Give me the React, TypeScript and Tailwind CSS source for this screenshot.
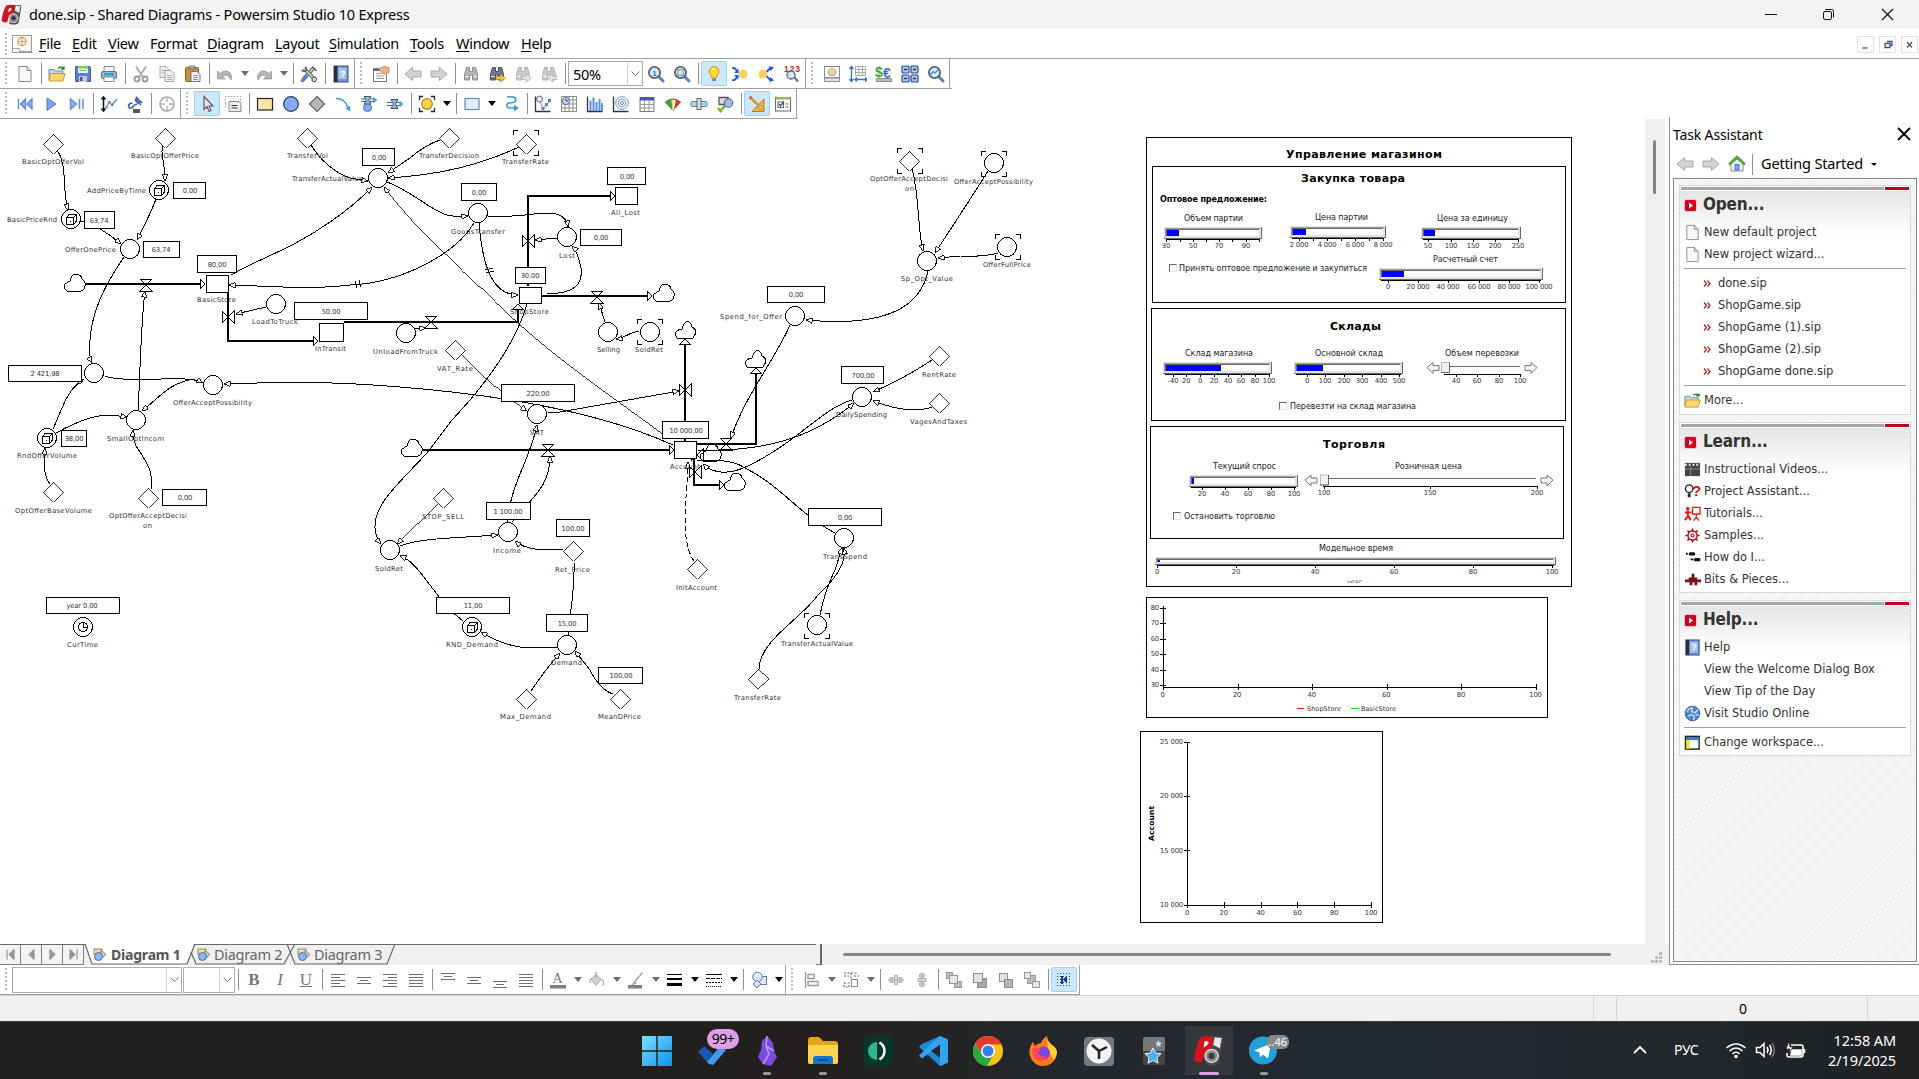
import React from "react";

const SANS = "font-['Noto_Sans','Open_Sans',sans-serif]";
const SHEET_TOP = 119;

/* ---------- icon set ---------- */

const Svg = ({ children, size = 18 }: { children: React.ReactNode; size?: number }) => (
  <svg width={size} height={size} viewBox="0 0 18 18" fill="none" className="shrink-0">
    {children}
  </svg>
);

const lens = (extra?: React.ReactNode) => (
  <>
    <path d="M11 11l5 5" stroke="#5b7fc4" strokeWidth="3" strokeLinecap="round" />
    <circle cx="7.5" cy="7.5" r="5.6" fill="#d5eafb" stroke="#59616b" strokeWidth="1.8" />
    {extra}
  </>
);

const binoculars = (c: string, d: string) => (
  <>
    <path d="M4.5 2.5h3v4h3v-4h3l2 7v5.500h-5V10h-3v5h-5V9.500z" fill={c} stroke={d} strokeWidth="1" strokeLinejoin="round" />
    <path d="M3 11.500h3.500M11.500 11.500H15" stroke="#fff" strokeWidth="1" />
  </>
);

const axes = <path d="M1.500 1.500v15h15" stroke="#333" strokeWidth="1.300" />;

const rows = (list: [number, number, number][], c = "#6e6e6e") => (
  <g shapeRendering="crispEdges">
    {list.map(([x, y, w], i) => (
      <rect key={i} x={x} y={y} width={w} height="1" fill={c} />
    ))}
  </g>
);

const squares = (a: [number, number], b: [number, number], s: number, top = false) => (
  <>
    <rect x={a[0] + 0.5} y={a[1] + 0.5} width={s} height={s} fill={top ? "#a5a5a5" : "#e3e3e3"} stroke="#8f8f8f" />
    <rect x={b[0] + 0.5} y={b[1] + 0.5} width={s} height={s} fill={top ? "#e3e3e3" : "#b5b5b5"} stroke="#8f8f8f" />
  </>
);

const icons: Record<string, React.ReactNode> = {
  page: (
    <>
      <path d="M3 1.500h8l4 4v11H3z" fill="#f8f8f8" stroke="#8a8a8a" />
      <path d="M11 1.500v4h4" fill="#ddd" stroke="#8a8a8a" />
    </>
  ),
  open: (
    <>
      <path d="M1 15V4.500h5l1.500 1.500H15V15z" fill="#bcd9f0" stroke="#7f8a80" />
      <path d="M2.500 8.500H17L15 16H1z" fill="#fbd56e" stroke="#c69a35" />
      <path d="M10 3.500q3-2.500 5.500 0M13 4h3V1.500" stroke="#2d8a1e" strokeWidth="1.400" />
    </>
  ),
  save: (
    <>
      <path d="M1.500 1.500h14l1 1v14h-15z" fill="#5b7fd0" stroke="#4462ab" />
      <rect x="4" y="1" width="10" height="7" fill="#e9f7e4" />
      <rect x="4" y="1" width="10" height="2.500" fill="#6fda57" />
      <path d="M5.500 5.500h7" stroke="#8aa" />
      <rect x="5" y="11" width="8" height="6" fill="#c6ccd8" />
      <rect x="6" y="12" width="2.500" height="4" fill="#3c559a" />
    </>
  ),
  print: (
    <>
      <path d="M4 7V1.500h10V7" fill="#f2f8fb" stroke="#889" />
      <rect x="1.500" y="6.500" width="15" height="7" rx="1.500" fill="#a9b4c0" stroke="#68727e" />
      <rect x="4" y="8" width="10" height="2.500" fill="#26a9cf" />
      <path d="M4 12h10v4.500H4z" fill="#fff" stroke="#889" />
    </>
  ),
  cut: (
    <>
      <path d="M4 1.500l6.500 10M14 1.500L7.500 11.500" stroke="#b0b0b0" strokeWidth="2" />
      <circle cx="5" cy="14" r="2.500" stroke="#999" strokeWidth="1.800" />
      <circle cx="13" cy="14" r="2.500" stroke="#999" strokeWidth="1.800" />
    </>
  ),
  copy: (
    <>
      <path d="M2 1.500h6l3 3v8H2z" fill="#eee" stroke="#aaa" />
      <path d="M7 5.500h6l3 3v8H7z" fill="#f2f2f2" stroke="#a0a0a0" />
      <path d="M9 10.500h5M9 12.500h5M9 14.500h5M4 5.500h3M4 8h2" stroke="#aaa" />
    </>
  ),
  paste: (
    <>
      <rect x="1.500" y="2.500" width="13" height="14" rx="1" fill="#c99045" stroke="#8d6025" />
      <rect x="5" y="1" width="6" height="3" fill="#aaa" stroke="#666" strokeWidth=".7" />
      <path d="M7 6.500h6l3 3v7H7z" fill="#f6f6f6" stroke="#777" />
      <path d="M9 10.500h5M9 12.500h5M9 14.500h5" stroke="#999" />
    </>
  ),
  undo: <path d="M1.500 6v8h8l-2.500-2.500q4-4 8 3.500q2-5-2-8t-9 1.500z" fill="#b5b5b5" stroke="#999" strokeWidth=".8" />,
  redo: <path d="M16.500 6v8h-8l2.500-2.500q-4-4-8 3.500q-2-5 2-8t9 1.500z" fill="#b5b5b5" stroke="#999" strokeWidth=".8" />,
  tools: (
    <>
      <path d="M14 2.500L3.500 14" stroke="#555" strokeWidth="3.500" />
      <path d="M14 2.500L3.500 14" stroke="#cfd4da" strokeWidth="1.800" />
      <path d="M4 3.500l11 11" stroke="#555" strokeWidth="3.200" />
      <path d="M4 3.500l11 11" stroke="#dde1e6" strokeWidth="1.500" />
      <path d="M2.500 15.500l3.500-3.500" stroke="#5b82cf" strokeWidth="3.600" strokeLinecap="round" />
      <path d="M1.500 5.500l3.500 1L6.500 5l-1-3.500M12.500 2l4 4" stroke="#555" strokeWidth="1.500" />
      <path d="M12 13l3-1 2 2-2 3-3-1z" fill="#ccd2d8" stroke="#555" />
    </>
  ),
  book: (
    <>
      <rect x="2" y="1" width="14" height="16" fill="#6f97dc" stroke="#3a4d7c" />
      <rect x="2" y="1" width="3.500" height="16" fill="#2a2e38" />
      <rect x="6.500" y="3" width="8" height="11" fill="#a8c5f0" />
      <text x="8" y="12" fontSize="9" fontWeight="700" fill="#fff" fontFamily="Liberation Sans">?</text>
    </>
  ),
  props: (
    <>
      <rect x="1.500" y="3.500" width="13" height="13" fill="#fff" stroke="#777" />
      <rect x="1.500" y="3.500" width="13" height="2.500" fill="#5a6fa8" />
      <path d="M4 8.500h5M4 11h8M4 13.500h8" stroke="#999" />
      <path d="M7 3.500q5-3.500 10-1v5l-4 1.500-3-1-2-2z" fill="#efb386" stroke="#b98560" strokeWidth=".8" />
    </>
  ),
  back: <path d="M1 9l7.500-6.500v3.500H17v6H8.500v3.500z" fill="#d2d2d2" stroke="#a8a8a8" />,
  fwd: <path d="M17 9L9.500 2.500v3.500H1v6h8.500v3.500z" fill="#d2d2d2" stroke="#a8a8a8" />,
  find: binoculars("#b5b5b5", "#8c8c8c"),
  findNext: (
    <>
      {binoculars("#6b7798", "#454c5e")}
      <path d="M8 11.500h4.500V9l5 4-5 4v-2.500H8z" fill="#f1cc3e" stroke="#a98917" strokeWidth=".7" />
    </>
  ),
  findFwd: (
    <>
      {binoculars("#c9c9c9", "#b3b3b3")}
      <path d="M8 11.500h4.500V9l5 4-5 4v-2.500H8z" fill="#e5e5e5" stroke="#b5b5b5" strokeWidth=".7" />
    </>
  ),
  findBack: (
    <>
      {binoculars("#c9c9c9", "#b3b3b3")}
      <path d="M17 11.500h-4.500V9l-5 4 5 4v-2.500H17z" fill="#e5e5e5" stroke="#b5b5b5" strokeWidth=".7" />
    </>
  ),
  zoomOne: lens(<text x="5.300" y="10.500" fontSize="8" fontWeight="700" fill="#2b6fcf" fontFamily="Liberation Sans">1</text>),
  zoomFit: lens(<rect x="4.800" y="4.800" width="5.400" height="5.400" stroke="#7c8792" />),
  bulb: (
    <>
      <path d="M9 1.500a5 5 0 0 1 3 9l-.8 2.500H6.800L6 10.500a5 5 0 0 1 3-9z" fill="#ffd92e" stroke="#d29b12" />
      <path d="M7.500 5q0-1.500 2-1.500" stroke="#fff" strokeWidth="1.500" />
      <path d="M7 13.500h4v2.500H7z" fill="#888" />
    </>
  ),
  flowIn: (
    <>
      <circle cx="12" cy="9" r="4.500" fill="#fbcf5f" />
      <path d="M1 3q3-1 5 3M1 15q3 1 5-3" stroke="#1f57e0" strokeWidth="1.800" />
      <path d="M7.500 3.500v4.500H3zM7.500 14.500V10H3z" fill="#1f57e0" />
    </>
  ),
  flowOut: (
    <>
      <circle cx="6" cy="9" r="4.500" fill="#fbcf5f" />
      <path d="M10 7q1-3 4-3.500M10 11q1 3 4 3.500" stroke="#1f57e0" strokeWidth="1.800" />
      <path d="M12 1l5 1.500L13.500 6zM12 17l5-1.500L13.500 12z" fill="#1f57e0" />
    </>
  ),
  digits: (
    <>
      <text x="1" y="7" fontSize="8.500" fontWeight="700" fill="#d41919" fontFamily="Liberation Sans" textLength="16">123</text>
      <path d="M11 12l4 4.500" stroke="#5b7fc4" strokeWidth="2.500" />
      <circle cx="8" cy="10" r="4" fill="#cfe6f5" stroke="#666" strokeWidth="1.300" />
    </>
  ),
  board: (
    <>
      <rect x="1.500" y="1.500" width="15" height="11" fill="#fdfdfb" stroke="#8d8d8d" />
      <path d="M9 3l4 3-1.500 4.500h-5L5 6z" fill="#ecd7a6" stroke="#a88a55" strokeWidth=".8" />
      <rect x="1.500" y="13" width="15" height="3.500" fill="#dfe4ee" stroke="#8d8d8d" />
    </>
  ),
  ruler: (
    <>
      <path d="M2.500 2v14M.5 4l2-2.500 2 2.500M.5 14l2 2.500 2-2.500" stroke="#3a6fc0" strokeWidth="1.300" />
      <path d="M6.500 14.500h11M8 12.500L6 14.500l2 2M16 12.500l2 2-2 2" stroke="#3a6fc0" strokeWidth="1.300" />
      <path d="M6.500 1.500h10v9h-10zM10 1.500v9M13.500 1.500v9M6.500 4.500h10M6.500 7.500h10" stroke="#aaa" />
    </>
  ),
  money: (
    <>
      <path d="M1.500 13.500h15v3h-15z" fill="#b5bfae" stroke="#8a9484" />
      <text x="0" y="12" fontSize="14" fontWeight="700" fill="#3da534" fontFamily="Liberation Sans">$</text>
      <text x="8" y="13" fontSize="14" fontWeight="700" fill="#4a6fc0" fontFamily="Liberation Sans">€</text>
    </>
  ),
  calc: (
    <>
      {[[1, 1], [10, 1], [1, 10], [10, 10]].map(([x, y]) => (
        <g key={`${x}-${y}`}>
          <rect x={x} y={y} width="7" height="7" rx="1" fill="#a9c0ea" stroke="#2f4f96" strokeWidth="1.200" />
          <path d={`M${x + 2} ${y + 3.5}h3`} stroke="#222" strokeWidth="1.200" />
        </g>
      ))}
    </>
  ),
  trend: lens(<path d="M3.500 9.500l2.500-3 2 1.500L11 5" stroke="#2b8fcf" strokeWidth="1.200" />),
  rewind: <path d="M2.500 4v10M9.500 4L4.500 9l5 5zM16 4l-5 5 5 5z" fill="#8fb2ee" stroke="#5f87cd" strokeWidth="1.300" />,
  play: <path d="M5 3l9 6-9 6.500z" fill="#7ba4ee" stroke="#5079c4" />,
  step: <path d="M2.500 4l6 5-6 5zM11.500 4v10M15 4v10" fill="#8fb2ee" stroke="#6c92d6" strokeWidth="1.600" />,
  range: (
    <>
      <path d="M3.500 2v14M1.500 4.500L3.500 2l2 2.500M1.500 13.500L3.500 16l2-2.500" stroke="#111" strokeWidth="1.500" />
      <path d="M6 13l3-6 3 3 5-6" stroke="#5b80bd" strokeWidth="1.300" />
      <path d="M5.500 11.500h2v2h-2zM8.500 6h2v2h-2zM11.500 9h2v2h-2z" fill="#5b80bd" />
    </>
  ),
  pin: (
    <>
      <path d="M9 4l6 6M10.500 2.500l5 5-3 1-3-3z" fill="#8aa9e6" stroke="#3c5ea8" strokeWidth="1.500" />
      <path d="M11 9q-4 1-5 4-3 1-3.500-2 .5-3 4-3" stroke="#3c66b5" strokeWidth="1.600" />
      <path d="M7 15h7M7 17h7" stroke="#222" strokeWidth="1.300" />
    </>
  ),
  target: (
    <>
      <circle cx="9" cy="9" r="7" stroke="#aaa" strokeWidth="1.600" />
      <path d="M9 2v5M9 11v5M2 9h5M11 9h5" stroke="#b5b5b5" strokeWidth="1.500" />
    </>
  ),
  pointer: <path d="M6 1.500v13l3-3 2 5 2-1-2-4.500h4z" fill="#e8e8e8" stroke="#555" strokeWidth="1.100" />,
  frame: (
    <>
      <path d="M1.500 8V1.500h15V8M1.500 8v4H4" stroke="#999" strokeDasharray="1.500 1.500" />
      <path d="M5 6.500h10l2 2v8H5z" fill="#eee" stroke="#888" />
      <path d="M7.500 10.500h6M7.500 13h6" stroke="#333" />
    </>
  ),
  stock: <rect x="1.500" y="3.500" width="15" height="11.500" fill="#fbe5a2" stroke="#222" strokeWidth="1.200" />,
  ball: <circle cx="9" cy="9" r="7.300" fill="#86abf5" stroke="#2c3850" strokeWidth="1.200" />,
  rhomb: <path d="M9 1.500L16.500 9 9 16.500 1.500 9z" fill="#b7b7b7" stroke="#666" strokeWidth="1.200" />,
  arc: (
    <>
      <path d="M2 3.500q9 0 12 9" stroke="#3d9ad8" strokeWidth="1.500" />
      <path d="M16.500 16.500l-.5-6-4.500 3z" fill="#3d9ad8" />
    </>
  ),
  flowRate: (
    <>
      <circle cx="7.500" cy="12.500" r="4" fill="#86abf5" stroke="#4c6aab" />
      <path d="M1 4h13M1 6.500h13" stroke="#44698f" />
      <path d="M4 1.500h7L8.500 5.200 11 9H4l2.500-3.800z" fill="#9cb6e0" stroke="#44597f" />
      <path d="M13 1.800l4.500 3.400L13 8.600z" fill="#53a4dd" />
    </>
  ),
  flow: (
    <>
      <path d="M1 7.500h13M1 10.500h13" stroke="#44698f" strokeWidth="1.200" />
      <path d="M5 4.500h7L9.500 9l2.500 4.500H5L7.500 9z" fill="#9cb6e0" stroke="#44597f" />
      <path d="M13.500 5.500L17.500 9l-4 3.500z" fill="#53a4dd" />
    </>
  ),
  sun: (
    <>
      <path d="M1.500 5V1.500H5M13 1.500h3.500V5M16.500 13v3.500H13M5 16.500H1.500V13" stroke="#222" strokeWidth="1.300" />
      <circle cx="9" cy="9" r="5.300" fill="#f9d44b" stroke="#a58630" strokeWidth="1.200" />
    </>
  ),
  box: <rect x="2" y="3.500" width="14" height="11" fill="#e1ecfb" stroke="#6b85b4" strokeWidth="1.200" />,
  squiggle: (
    <>
      <path d="M5 2q9-1 9 2.500T6 8q-3 3 1 5h6" stroke="#3d9ad8" strokeWidth="1.600" />
      <path d="M12 10l5 3-5 3.500z" fill="#3d9ad8" />
    </>
  ),
  timeGraph: (
    <>
      {axes}
      <path d="M6 6l3 8 4-5 3-3" stroke="#5b80bd" />
      <path d="M7.500 12h3v3h-3zM11 8h3v3h-3zM14 4h3v3h-3z" fill="#5b80bd" />
      <circle cx="5.500" cy="4" r="3" fill="#e2ecfa" stroke="#667" />
    </>
  ),
  timeTable: (
    <>
      <path d="M1.500 1.500h15v15h-15zM1.500 5h15M1.500 9h15M1.500 13h15M5 1.500v15M9 1.500v15M13 1.500v15" stroke="#8b8b8b" />
      <circle cx="6" cy="6" r="3.500" fill="#cfe0fa" stroke="#47639c" />
      <path d="M6 4v2h2" stroke="#333" />
    </>
  ),
  bars: (
    <>
      {axes}
      <path d="M4.500 16V5.500M7.500 16V2.500M10.500 16V7M13.500 16V4M16 16V8" stroke="#5a90dc" strokeWidth="2" />
    </>
  ),
  spiral: (
    <>
      {axes}
      <circle cx="10" cy="8" r="6.300" stroke="#6b93cd" />
      <circle cx="10" cy="8" r="3.800" stroke="#6b93cd" />
      <circle cx="10" cy="8" r="1.500" stroke="#6b93cd" />
    </>
  ),
  table: (
    <>
      <path d="M2 2.500h14v14H2z" fill="#fff" stroke="#777" />
      <path d="M2 2h14v3.500H2z" fill="#4a51b8" />
      <path d="M2 9.500h14M2 13h14M6.500 5v11M11 5v11" stroke="#999" />
    </>
  ),
  gauge: (
    <>
      <path d="M1.500 7q7.500-6 15 0L9 15.500z" fill="#f6dc6c" stroke="#555" />
      <path d="M1.500 7Q4 5 7 4.200L9 15.500z" fill="#3aa63a" />
      <path d="M16.500 7Q14 5 11.500 4.200L9 15.500z" fill="#df3c2c" />
      <path d="M9 15L11 5" stroke="#fff" strokeWidth="1.500" />
    </>
  ),
  slider: (
    <>
      <rect x="1" y="6.500" width="16" height="5" rx="1" fill="#a8d1f1" stroke="#5d89af" />
      <rect x="7" y="3.500" width="4" height="11" fill="#ddd" stroke="#666" />
    </>
  ),
  check: (
    <>
      <path d="M3 2.500h9v7H3z" fill="#ddd" stroke="#555" strokeWidth="1.300" />
      <circle cx="12.500" cy="8" r="4.300" fill="#9fbcf0" stroke="#456" />
      <path d="M2 13l2.500 3L9 10.500" stroke="#75b62f" strokeWidth="2.600" />
    </>
  ),
  design: (
    <>
      <path d="M16 4v12.500H4z" fill="#f0b73b" stroke="#b57d14" />
      <path d="M13.500 10v4H9.500z" fill="#cce8ff" stroke="#b57d14" strokeWidth=".7" />
      <path d="M2 2l9.500 9.500" stroke="#d79a3a" strokeWidth="2.600" />
      <path d="M1.500 1.500l2 2" stroke="#d85b5b" strokeWidth="2.800" />
    </>
  ),
  present: (
    <>
      <rect x="1.500" y="2.500" width="15" height="13.500" fill="#fff" stroke="#666" />
      <rect x="1.500" y="2" width="15" height="2.500" fill="#8fc14a" />
      <rect x="4" y="7" width="5.500" height="5.500" fill="#fff" stroke="#666" />
      <path d="M5 9l1.500 2L10 6.500" stroke="#26559b" strokeWidth="1.300" />
      <path d="M11.500 9h3M11.500 12h3" stroke="#666" />
    </>
  ),
  alignL: rows([[2, 3, 14], [2, 6, 9], [2, 9, 14], [2, 12, 9], [2, 15, 14]]),
  alignC: rows([[2, 6, 14], [5, 9, 8], [2, 12, 14]]),
  alignR: rows([[2, 3, 14], [7, 6, 9], [2, 9, 14], [7, 12, 9], [2, 15, 14]]),
  alignJ: rows([[2, 3, 14], [2, 6, 14], [2, 9, 14], [2, 12, 14], [2, 15, 14]]),
  top: rows([[2, 2, 14], [5, 5, 8], [2, 8, 14]]),
  mid: rows([[2, 6, 14], [5, 9, 8], [2, 12, 14]]),
  low: rows([[2, 10, 14], [5, 13, 8], [2, 16, 14]]),
  fontColor: (
    <>
      <text x="3.500" y="12" fontSize="14" fill="#777" fontFamily="Liberation Serif">A</text>
      <rect x="1" y="14" width="16" height="3.500" fill="#808080" />
    </>
  ),
  fill: (
    <>
      <path d="M3 8l5-4.500 5.500 5-5.500 6z" fill="#cfcfcf" stroke="#ababab" />
      <path d="M8 1v6M3 8q-1.500 1-1 4M13.500 8.500q3 1.500 1.500 6" stroke="#ababab" strokeWidth="1.300" />
    </>
  ),
  pen: (
    <>
      <path d="M15.500 1.500L8 10.500l-2 2.500 3.500-1" stroke="#aaa" strokeWidth="1.600" />
      <rect x="1" y="14" width="14" height="3.500" fill="#808080" />
    </>
  ),
  weight: (
    <g shapeRendering="crispEdges" fill="#000">
      <rect x="1" y="3" width="15" height="1" />
      <rect x="1" y="7" width="15" height="2" />
      <rect x="1" y="12" width="15" height="3" />
    </g>
  ),
  dashes: (
    <g shapeRendering="crispEdges" stroke="#000">
      <path d="M1 3.500h16" />
      <path d="M1 7.500h16" strokeDasharray="4 1" />
      <path d="M1 11.500h16" strokeDasharray="2 1" />
      <path d="M1 15.500h16" strokeDasharray="1 1" />
    </g>
  ),
  shapes: (
    <>
      <rect x="7.500" y="5.500" width="9" height="8" fill="#dfeaf8" stroke="#5d7fae" />
      <circle cx="7.500" cy="6" r="4.800" fill="#dce9fa" stroke="#5d7fae" />
      <path d="M7 9l4 4-4 4-4-4z" fill="#cfdff5" stroke="#5d7fae" />
    </>
  ),
  alignObj: <path d="M2.500 1v16M5 3.500h6v4H5zM5 10.500h10v4H5z" stroke="#999" strokeWidth="1.400" />,
  groupObj: (
    <>
      <path d="M2 2h14M2 5h5M9 2v6M12 5h5M2 12h5v4H2z" stroke="#666" strokeDasharray="2 1.500" strokeWidth="1.200" />
      <rect x="9.500" y="8.500" width="6" height="7" stroke="#888" />
    </>
  ),
  centerH: <path d="M1 9h16M3 6.500h3v5H3zM12 6.500h3v5h-3zM7.500 4h3v10h-3z" fill="#d8d8d8" stroke="#b0b0b0" />,
  centerV: <path d="M9 1v16M6.500 3h5v3h-5zM6.500 12h5v3h-5zM5 7.500h8v3H5z" fill="#d8d8d8" stroke="#b0b0b0" />,
  front: (
    <>
      <rect x="1.500" y="1.500" width="6" height="6" fill="#bbb" stroke="#999" />
      <rect x="9.500" y="10.500" width="7" height="6" fill="#bbb" stroke="#999" />
      <rect x="4.500" y="4.500" width="8" height="8" fill="#e8e8e8" stroke="#999" />
    </>
  ),
  back2: squares([6, 7], [2, 2], 9, true),
  forward: squares([2, 2], [7, 8], 8),
  backward: (
    <>
      <rect x="4.500" y="4.500" width="8" height="8" fill="#bbb" stroke="#999" />
      <rect x="1.500" y="1.500" width="6" height="6" fill="#e8e8e8" stroke="#999" />
      <rect x="9.500" y="10.500" width="7" height="6" fill="#e8e8e8" stroke="#999" />
    </>
  ),
  grid: (
    <g shapeRendering="crispEdges">
      {[2, 5, 8, 11, 14].map((y) => (
        <path key={y} d={`M2 ${y + 0.5}h15`} stroke="#1d3c82" strokeWidth="1" strokeDasharray="1 2" />
      ))}
      <path d="M6 5h2v8H6zM12 5v7l-4-3.500z" fill="#1d3c82" />
    </g>
  ),
};

/* ---------- toolbars ---------- */

const Grip = () => <div className="my-[3px] ml-[5px] mr-[6px] w-[2px] shrink-0 self-stretch bg-[repeating-linear-gradient(to_bottom,#bdbdbd_0_2px,transparent_2px_4px)]" />;
const Sep = () => (
  <div className="flex w-[6px] shrink-0 justify-center self-stretch py-1">
    <div className="w-px bg-[#909090]" />
  </div>
);
const Edge = () => <div className="w-px shrink-0 self-stretch bg-[#a0a0a0]" />;
const Drop = ({ dark }: { dark?: boolean }) => (
  <div className="flex w-[13px] shrink-0 justify-center">
    <div className={`h-0 w-0 border-x-[4.500px] border-t-[5px] border-x-transparent ${dark ? "border-t-black" : "border-t-[#6d6d6d]"}`} />
  </div>
);
const Tool = ({ name, on }: { name: string; on?: boolean }) => (
  <div className={`flex h-[25px] w-[26px] shrink-0 items-center justify-center ${on ? "rounded-[2px] border border-[#99d1ff] bg-[#cce8ff]" : ""}`}>
    <Svg>{icons[name]}</Svg>
  </div>
);

/* "|" separator, "]" end of a bar, ":" grip, "v"/"V" drop arrow, "*name" pressed button */
const Strip = ({ items }: { items: string }) => (
  <>
    {items.split(" ").map((it, i) => {
      if (it === "|") return <Sep key={i} />;
      if (it === "]") return <Edge key={i} />;
      if (it === ":") return <Grip key={i} />;
      if (it === "v" || it === "V") return <Drop key={i} dark={it === "V"} />;
      return <Tool key={i} name={it.replace("*", "")} on={it[0] === "*"} />;
    })}
  </>
);

const Combo = ({ className, value }: { className: string; value?: string }) => (
  <div className={`flex shrink-0 items-stretch border ${className}`}>
    <span className="flex-1 pl-1 pt-px text-[14.500px] leading-[22px] tracking-[-0.3px]">{value}</span>
    <span className="flex w-[15px] items-center justify-center border-l border-[#d0d0d0]">
      <svg width="9" height="6" viewBox="0 0 9 6" fill="none">
        <path d="M.5.5l4 4 4-4" stroke="#777" />
      </svg>
    </span>
  </div>
);

const LogoMark = ({ size }: { size: number }) => (
  <svg width={size} height={size} viewBox="0 0 20 20">
    <path d="M9 1h9q1.500 0 1.300 2L17 17q-.3 2-3 2.500-4 .5-6-1z" fill="#4a4a4a" />
    <path d="M14 1.500l4.500.5-1.200 6.500-4.300-2z" fill="#e8e8e8" />
    <path d="M5 1.500q8-2.500 8 2.500 0 5-5 6.500-1 3-2 6.500-3 1.500-5.500-1Q2 6 5 1.500z" fill="#d8121c" />
    <path d="M7.500 4q2.500-.5 2.500 1t-3.200 3z" fill="#fff" />
    <circle cx="12" cy="13.500" r="4.200" fill="#8f8f8f" stroke="#d5d5d5" />
    <circle cx="12" cy="13.500" r="2" fill="#3a3a3a" />
  </svg>
);

const menus = ["File", "Edit", "View", "Format", "Diagram", "Layout", "Simulation", "Tools", "Window", "Help"];
const menuWidths = ["w-[33px]", "w-[36px]", "w-[42px]", "w-[57px]", "w-[68px]", "w-[54px]", "w-[81px]", "w-[46px]", "w-[65px]", "w-[40px]"];

const Header = () => (
  <header className="shrink-0">
    <div className="flex h-[29px] items-center bg-[#f3f3f3] pl-[1px]">
      <LogoMark size={21} />
      <span className="ml-[7px] text-[14.500px] tracking-[-0.190px]">done.sip - Shared Diagrams - Powersim Studio 10 Express</span>
      <div className="ml-auto flex w-[177px] items-center">
        <svg width="177" height="29" viewBox="0 0 177 29" fill="none" stroke="#111">
          <path d="M23 14.500h12" />
          <rect x="81.500" y="11.500" width="8" height="8" rx="1.500" />
          <path d="M83.500 9.500h6q2 0 2 2v6" />
          <path d="M140 9l11 11M151 9l-11 11" strokeWidth="1.200" />
        </svg>
      </div>
    </div>
    <div className="flex h-[30px] items-center border-b border-[#a0a0a0] bg-white pt-px">
      <Grip />
      <div className="mr-[6px] flex w-[20px] -translate-x-px justify-center">
        <svg width="20" height="19" viewBox="0 0 20 19" fill="none">
          <rect x=".5" y=".5" width="19" height="17" fill="#fcfbf6" stroke="#999" />
          <path d="M.5 13.500h7v3h12" fill="#dbe3f4" stroke="#9aa4bb" />
          <circle cx="10" cy="6.500" r="4" stroke="#caa15e" strokeWidth="1.300" />
          <path d="M10 2v9M6 6.500h8" stroke="#caa15e" />
        </svg>
      </div>
      {menus.map((m, i) => {
        const u = m === "Format" ? 1 : 0;
        return (
          <span key={m} className={`shrink-0 text-[14.500px] tracking-[-0.3px] ${menuWidths[i]}`}>
            {m.slice(0, u)}
            <span className="underline underline-offset-2">{m[u]}</span>
            {m.slice(u + 1)}
          </span>
        );
      })}
      <div className="ml-auto mr-[1px] flex gap-[5px]">
        {["M4 11h5", "M4.500 6.500h5v4h-5zM6.500 4.500h5v4h-2", "M4.500 5l5 5.500M9.500 5l-5 5.500"].map((d) => (
          <svg key={d} width="17" height="17" viewBox="0 0 17 17" fill="none">
            <rect x=".5" y=".5" width="16" height="16" fill="#fdfdfd" stroke="#e1e1e1" />
            <path d={d} transform="translate(1.500 1)" stroke="#40566e" strokeWidth="1.300" />
          </svg>
        ))}
      </div>
    </div>
    <div className="flex h-[30px] w-[952px] items-center border-b border-[#a0a0a0] bg-white">
      <div className="flex w-[12px] self-stretch"><Grip /></div>
      <Strip items="page | open save print | cut copy paste | undo v redo v | tools | book ] : props | back fwd | find findNext findFwd findBack |" />
      <Combo className="h-[25px] w-[75px] border-[#a6a6a6]" value="50%" />
      <Strip items="zoomOne zoomFit | *bulb flowIn flowOut digits ] : board ruler money calc trend ]" />
    </div>
    <div className="flex h-[30px] w-[798px] items-center border-b border-[#a0a0a0] bg-white">
      <div className="flex w-[12px] self-stretch"><Grip /></div>
      <Strip items="rewind play step | range pin | target ] : *pointer frame | stock ball rhomb arc flowRate flow | sun V | box V squiggle | timeGraph timeTable bars spiral table gauge slider check | *design present ]" />
    </div>
  </header>
);

/* ---------- diagram ---------- */

type Label = [text: string, x1: number, x2: number, y: number];

const nodeLabels: Label[] = [
  ["BasicOptOfferVol", 22, 84, 162], ["BasicOptOfferPrice", 131, 199, 155.5], ["AddPriceByTime", 87, 146, 190.5],
  ["BasicPriceRnd", 7, 57, 219.5], ["OfferOnePrice", 65, 116, 249.5], ["BasicStore", 197, 236, 299.5],
  ["TransferVol", 287, 328, 155.5], ["TransferActualValue", 292, 363, 178.5], ["LoadToTruck", 252, 298, 321.5],
  ["InTransit", 315, 346, 348.5], ["UnloadFromTruck", 373, 438, 351.5], ["OfferAcceptPossibility", 173, 252, 402.5],
  ["SmallOptIncom", 107, 164, 438.5], ["RndOfferVolume", 17, 77, 455.5], ["OptOfferBaseVolume", 15, 92, 510.5],
  ["OptOfferAcceptDecisi", 109, 187, 515.5], ["on", 143, 152, 525.5], ["CurTime", 67, 98, 644.5],
  ["SoldRet", 375, 403, 568.5], ["TransferDecision", 419, 479, 155.5], ["TransferRate", 502, 549, 161.5],
  ["GoodsTransfer", 451, 505, 231.5], ["All_Lost", 611, 640, 212.5], ["Lost", 559, 575, 255.5],
  ["ShopStore", 510, 549, 311.5], ["Selling", 597, 620, 349.5], ["SoldRet", 635, 663, 349.5],
  ["VAT_Rate", 437, 473, 368.5], ["VAT", 530, 544, 432.5], ["Spend_for_Offer", 720, 782, 316.5],
  ["Account", 670, 700, 466.5], ["InitAccount", 676, 717, 587.5], ["STOP_SELL", 422, 464, 516.5],
  ["Income", 493, 521, 550.5], ["Ret_Price", 555, 590, 569.5], ["RND_Demand", 446, 498, 644.5],
  ["Demand", 551, 582, 662.5], ["Max_Demand", 500, 551, 716.5], ["MeanDPrice", 598, 641, 716.5],
  ["TransSpend", 823, 867, 556.5], ["TransferActualValue", 781, 853, 643.5], ["TransferRate", 734, 781, 697.5],
  ["OptOfferAcceptDecisi", 870, 948, 178.5], ["on", 905, 914, 188.5], ["OfferAcceptPossibility", 954, 1033, 181.5],
  ["OfferFullPrice", 983, 1031, 264.5], ["Sp_Opt_Value", 901, 953, 278.5], ["RentRate", 922, 956, 374.5],
  ["DailySpending", 836, 887, 414.5], ["VagesAndTaxes", 910, 967, 421.5],
];

const diamonds: [number, number][] = [
  [53, 143], [165, 137], [307, 137], [449, 137], [526, 143], [455, 349], [53, 491], [148, 497], [443, 497], [573, 550],
  [697, 568], [526, 698], [620, 698], [758, 678], [909, 160], [939, 355], [939, 402],
];
const circles: [number, number][] = [
  [159, 190], [71, 219], [130, 249], [378, 178], [276, 304], [406, 333], [94, 373], [213, 385], [136, 420], [47, 438], [83, 627],
  [390, 550], [478, 213], [567, 237], [608, 332], [650, 332], [537, 414], [795, 316], [508, 532], [472, 627], [567, 645],
  [844, 538], [817, 625], [994, 163], [1007, 247], [927, 261], [862, 397],
];
const dice: [number, number][] = [[159, 190], [71, 219], [47, 438], [472, 627]];
const brackets: [number, number][] = [[513, 130], [637, 319], [804, 613], [897, 148], [981, 151], [995, 234]];
const stocks: [number, number, number, number][] = [[206, 275, 22, 17], [319, 323, 24, 18], [615, 187, 22, 17], [519, 287, 22, 16], [674, 441, 22, 17]];

const values: [x: number, y: number, w: number, h: number, text: string, tx: number][] = [
  [173, 182, 32, 16, "0,00", 190], [84, 211, 30, 17, "63,74", 99], [143, 241, 36, 16, "63,74", 161], [197, 255, 39, 17, "80,00", 217],
  [362, 148, 32, 17, "0,00", 379], [294, 302, 73, 17, "50,00", 331], [8, 365, 73, 16, "2 421,98", 45], [61, 430, 25, 16, "38,00", 74],
  [162, 489, 44, 16, "0,00", 185], [46, 597, 73, 16, "year 0,00", 82], [461, 183, 35, 17, "0,00", 479], [607, 167, 38, 17, "0,00", 627],
  [580, 229, 41, 16, "0,00", 601], [515, 267, 30, 16, "30,00", 530], [501, 384, 73, 17, "220,00", 538], [767, 286, 57, 16, "0,00", 796],
  [662, 421, 46, 17, "10 000,00", 686], [486, 502, 44, 17, "1 100,00", 508], [556, 519, 33, 17, "100,00", 573], [436, 597, 73, 16, "11,00", 473],
  [546, 614, 41, 17, "15,00", 567], [598, 667, 44, 16, "100,00", 621], [808, 508, 73, 17, "0,00", 845], [841, 366, 42, 17, "700,00", 863],
];

const links = [
  "M57 150Q63 158 64 175C65 190 65 200 68 210", "M163 146Q161 150 163 160Q165 172 165 181", "M156 199C150 215 143 228 137 240",
  "M81 221Q100 226 121 244", "M124 257C105 285 92 310 90 340C89 350 89 357 92 363", "M105 376C120 382 160 378 185 379Q195 379 203 383",
  "M195 379C170 382 160 397 142 411", "M138 410C140 380 141 320 145 291", "M53 429C62 410 66 390 84 379", "M56 433C80 420 95 415 110 415L127 417",
  "M50 484Q44 478 44 460L45 448", "M151 489C153 470 148 465 140 452Q132 442 133 430", "M311 145C320 160 335 173 350 178L368 181",
  "M231 275C260 258 290 250 330 222Q355 205 372 187", "M474 223C455 255 400 283 350 285C310 290 270 286 229 285", "M266 307L236 314",
  "M440 140Q425 145 410 158L388 173", "M519 147C480 165 440 175 388 178", "M387 182C410 190 430 210 447 215Q455 217 468 216",
  "M488 216C520 218 530 213 550 213Q566 214 568 227", "M557 238L535 240",
  "M547 294C575 293 583 285 581 268Q578 252 572 246", "M479 223C482 260 490 295 518 295", "M414 329L426 328", "M605 322L599 303",
  "M639 331C630 332 625 338 616 339", "M548 413L560 412L679 391",
  "M673 445C600 412 500 395 400 387C330 381 280 382 224 384", "M527 304C515 345 485 385 452 420L427 453C395 487 374 505 375 528Q376 538 381 544",
  "M400 546Q415 540 450 538L498 535", "M563 550L535 549Q522 547 515 541", "M507 522C512 480 530 460 537 425",
  "M512 522C535 495 550 485 550 456", "M463 621Q448 610 430 585C420 572 412 560 400 556", "M557 647L520 647Q500 644 481 632",
  "M531 691Q545 670 560 653", "M613 694Q600 690 590 670L575 651", "M759 669C760 640 800 620 818 595C840 575 846 560 844 548",
  "M820 615Q825 590 835 570L842 548", "M852 400C820 410 800 440 750 465Q720 480 703 464", "M697 450C760 452 810 440 854 403",
  "M928 271C920 310 880 327 806 320", "M790 325C775 360 745 395 731 438", "M912 168C920 200 917 225 923 251",
  "M988 171C970 200 950 230 935 253", "M998 253Q985 257 960 256L938 258", "M932 360Q905 378 873 392", "M932 407Q910 415 873 401",
];
const slantedLinks = ["M668 438C610 395 560 362 510 316C470 277 420 235 384 187", "M461 354Q495 390 527 411", "M438 504L397 544"];
const plainLinks = ["M574 560C575 590 571 605 568 635", "M835 533C800 515 780 485 745 468C730 458 712 461 697 461", "M355 281l2 7M359 280l2 7M485 270l8-2M486 273l8-2"];

const pipes = ["M86 284H200", "M228 293V341H313", "M344 322H518V309", "M528 286V196H610", "M542 296H647", "M685 343V441", "M697 444H756V372", "M422 450H669", "M694 459V485H719"];
const valvesV: [number, number][] = [[146, 285], [431, 322], [597, 297], [726, 444], [548, 450]];
const valvesH: [number, number][] = [[228, 317], [528, 241], [685, 390], [695, 472], [697, 455]];
const tipsRight: [number, number][] = [[200, 284], [313, 341], [610, 196], [647, 296], [669, 450], [719, 485]];
const tipsUp: [number, number][] = [[518, 304], [685, 339], [756, 368]];
const cloudsAt: [number, number][] = [[64, 274], [401, 439], [653, 284], [724, 473], [700, 444]];
const cloudsTop: [number, number][] = [[675, 321], [745, 350]];

const TEXT = "DejaVu Sans, sans-serif";

const Num = ({ x, y, t, anchor = "middle" }: { x: number; y: number; t: string; anchor?: "middle" | "end" }) => (
  <text x={x} y={y + 2.5} fontSize="6.800" letterSpacing="-0.150" textAnchor={anchor} fill="#333">{t}</text>
);

const Links = () => (
  <g fill="none" stroke="#000">
    <defs>
      <marker id="tip" viewBox="0 0 9 8" refX="8" refY="4" markerWidth="8" markerHeight="7" orient="auto" markerUnits="userSpaceOnUse">
        <path d="M1 1l7 3-7 3z" fill="#fff" stroke="#000" strokeWidth="1" />
      </marker>
    </defs>
    {pipes.map((d) => <path key={d} d={d} strokeWidth="2" />)}
    {links.map((d) => <path key={d} d={d} markerEnd="url(#tip)" />)}
    {slantedLinks.map((d) => <path key={d} d={d} strokeWidth=".8" markerEnd="url(#tip)" />)}
    {plainLinks.map((d) => <path key={d} d={d} />)}
    <path d="M694 561Q685 548 685 520C685 500 688 480 688 462" strokeDasharray="5 3" markerEnd="url(#tip)" />
    {valvesV.map(([x, y]) => <path key={`${x}-${y}`} d={`M${x - 6} ${y - 6}h12l-12 12h12z`} />)}
    {valvesH.map(([x, y]) => <path key={`${x}-${y}`} d={`M${x - 6} ${y - 6}v12l12-12v12z`} />)}
    {tipsRight.map(([x, y]) => <path key={`${x}-${y}`} d={`M${x} ${y - 5}l5 5-5 5z`} fill="#fff" />)}
    {tipsUp.map(([x, y]) => <path key={`${x}-${y}`} d={`M${x - 5} ${y + 5}l5-5 5 5z`} fill="#fff" />)}
    {cloudsAt.map(([x, y]) => (
      <path key={`${x}-${y}`} d={`M${x + 3} ${y + 17}q-4-3-2-7l5-3q1-6 5-7q6 0 7 5q4 3 3 7q-1 5-4 5z`} fill="none" />
    ))}
    {cloudsTop.map(([x, y]) => (
      <path key={`${x}-${y}`} d={`M${x + 2} ${y + 17}q-3-4 0-7q2-2 5-2q1-5 5-8q5 2 5 6q4 2 4 6l-3 5z`} fill="none" />
    ))}
  </g>
);

const Shapes = () => (
  <g fill="#fff" stroke="#000">
    {diamonds.map(([x, y]) => <path key={`${x}-${y}`} strokeWidth=".8" d={`M${x + 0.5} ${y - 9.5}l10 10-10 10-10-10z`} />)}
    {circles.map(([x, y]) => <circle key={`${x}-${y}`} cx={x} cy={y} r="9.500" />)}
    {dice.map(([x, y]) => (
      <path key={`${x}-${y}`} d={`M${x - 4.5} ${y - 1.5}h7v7h-7zl3-3.500h7v7l-3 3.500M${x + 2.5} ${y - 1.5}l3-3.500M${x - 1.5} ${y + 2}h1`} />
    ))}
    <circle cx="83" cy="627" r="4.500" />
    <path d="M83.500 623v4h4" />
    {brackets.map(([x, y]) => (
      <path key={`${x}-${y}`} fill="none" d={`M${x + 0.5} ${y + 5}v-4.500h4.500M${x + 21} ${y + 0.5}h4.500v4.500M${x + 25.5} ${y + 21}v4.500h-4.500M${x + 5} ${y + 25.5}h-4.500v-4.500`} />
    ))}
    {stocks.map(([x, y, w, h]) => <rect key={`${x}-${y}`} x={x + 0.5} y={y + 0.5} width={w} height={h} />)}
    {values.map(([x, y, w, h]) => <rect key={`${x}-${y}`} x={x + 0.5} y={y + 0.5} width={w} height={h} />)}
  </g>
);

const Charts = () => (
  <>
    <g fill="none" stroke="#000" shapeRendering="crispEdges">
      <rect x="1146.500" y="597.500" width="401" height="120" />
      <path d="M1163.500 606v84M1163 687.500h374" />
      {[608, 623, 639, 654, 670, 685].map((y) => <path key={y} d={`M1160 ${y + 0.5}h6`} />)}
      {[1163, 1238, 1312, 1387, 1461, 1536].map((x) => <path key={x} d={`M${x + 0.5} 684v6`} />)}
      <rect x="1140.500" y="731.500" width="242" height="191" />
      <path d="M1187.500 742v165M1187 905.500h184" />
      {[742, 796, 850, 905].map((y) => <path key={y} d={`M1184 ${y + 0.5}h6`} />)}
      {[1187, 1224, 1261, 1297, 1334, 1371].map((x) => <path key={x} d={`M${x + 0.5} 902v6`} />)}
      <path d="M1297 708.500h7" stroke="#f00" />
      <path d="M1351 708.500h8" stroke="#0f0" />
    </g>
    {["80", "70", "60", "50", "40", "30"].map((t, i) => <Num key={t} x={1159} y={607.5 + i * 15.4} t={t} anchor="end" />)}
    {["0", "20", "40", "60", "80", "100"].map((t, i) => <Num key={t} x={1162.5 + i * 74.6} y={694.5} t={t} />)}
    <text x="1307" y="711" fontSize="6.500" textLength="34" fill="#333">ShopStore</text>
    <text x="1361" y="711" fontSize="6.500" textLength="35" fill="#333">BasicStore</text>
    {["25 000", "20 000", "15 000", "10 000"].map((t, i) => <Num key={t} x={1183} y={741.5 + i * 54.3} t={t} anchor="end" />)}
    {["0", "20", "40", "60", "80", "100"].map((t, i) => <Num key={t} x={1187 + i * 36.8} y={912.5} t={t} />)}
    <text transform="rotate(-90 1154 841)" x="1154" y="841" fontSize="7.500" fontWeight="700" textLength="35">Account</text>
  </>
);

type GaugeProps = { x: number; y: number; w: number; h?: number; fill: number; ticks: number[]; labels: [string, number][] };

const Scale = ({ x1, x2, y, ticks, labels }: { x1: number; x2: number; y: number; ticks: number[]; labels: [string, number][] }) => (
  <>
    <path d={`M${x1} ${y + 0.5}H${x2}` + ticks.map((t) => `M${t + 0.5} ${y}v3`).join("")} stroke="#000" fill="none" shapeRendering="crispEdges" />
    {labels.map(([t, lx]) => <Num key={t} x={lx} y={y + 6.5} t={t} />)}
  </>
);

const Gauge = ({ x, y, w, h = 12, fill, ticks, labels }: GaugeProps) => (
  <g>
    <g shapeRendering="crispEdges">
      <rect x={x} y={y} width={w} height={h} fill="#696969" />
      <rect x={x} y={y} width={w - 1} height={h - 1} fill="#e3e3e3" />
      <rect x={x + 1} y={y + 1} width={w - 3} height={h - 3} fill="#a0a0a0" />
      <rect x={x + 2} y={y + 2} width={w - 4} height={h - 4} fill="#e3e3e3" />
      <rect x={x + 2} y={y + 2} width={w - 5} height={h - 5} fill="#696969" />
      <rect x={x + 3} y={y + 3} width={w - 6} height={h - 6} fill="#fff" />
      <rect x={x + 3} y={y + 3} width={fill} height={h - 6} fill="#00f" />
    </g>
    <Scale x1={x + 2} x2={x + w - 2} y={y + h} ticks={ticks} labels={labels} />
  </g>
);

const SliderBar = ({ x, y, end, a1, a2, ticks, labels }: { x: number; y: number; end: number; a1: number; a2: number; ticks: number[]; labels: [string, number][] }) => (
  <g>
    <path d={`M${a1} ${y}l6-5v3h6v5h-6v3zM${a2} ${y}l-6-5v3h-6v5h6v3z`} fill="#f4f4f4" stroke="#777" />
    <path d={`M${x + 8} ${y - 1.5}H${end}`} stroke="#696969" shapeRendering="crispEdges" />
    <rect x={x + 0.5} y={y - 5} width="8" height="10" fill="#f0f0f0" stroke="#bbb" />
    <path d={`M${x} ${y + 5}h8.500v-10`} stroke="#696969" fill="none" />
    <Scale x1={x + 3} x2={end + 1} y={Math.round(y) + 6} ticks={ticks} labels={labels} />
  </g>
);

const num = (names: string, at: number[]): [string, number][] => names.split(",").map((n, i) => [n, at[i]]);

const Gauges = () => (
  <>
    <Gauge x={1164} y={227} w={98} fill={12} ticks={[1166, 1180, 1193, 1206, 1219, 1232, 1246, 1259]} labels={num("30,50,70,90", [1166, 1193, 1219, 1246])} />
    <Gauge x={1290} y={226} w={96} fill={13} ticks={[1299, 1313, 1327, 1341, 1355, 1369, 1383]} labels={num("2 000,4 000,6 000,8 000", [1299, 1327, 1355, 1383])} />
    <Gauge x={1421} y={227} w={100} fill={11} ticks={[1428, 1451, 1473, 1495, 1518]} labels={num("50,100,150,200,250", [1428, 1451, 1473, 1495, 1518])} />
    <Gauge x={1379} y={268} w={164} fill={22} ticks={[1388, 1418, 1448, 1479, 1509, 1539]} labels={num("0,20 000,40 000,60 000,80 000,100 000", [1388, 1418, 1448, 1479, 1509, 1539])} />
    <Gauge x={1163} y={362} w={109} fill={55} ticks={[1173, 1186, 1200, 1214, 1228, 1241, 1255, 1269]} labels={num("-40,-20,0,20,40,60,80,100", [1173, 1185, 1200, 1214, 1228, 1241, 1255, 1269])} />
    <Gauge x={1294} y={362} w={109} fill={26} ticks={[1307, 1325, 1344, 1362, 1381, 1399]} labels={num("0,100,200,300,400,500", [1307, 1325, 1344, 1362, 1381, 1399])} />
    <Gauge x={1189} y={475} w={109} fill={2} ticks={[1202, 1225, 1248, 1271, 1294]} labels={num("20,40,60,80,100", [1202, 1225, 1248, 1271, 1294])} />
    <Gauge x={1155} y={557} w={401} h={8} fill={2} ticks={[1157, 1236, 1315, 1394, 1473, 1552]} labels={num("0,20,40,60,80,100", [1157, 1236, 1315, 1394, 1473, 1552])} />
    <SliderBar x={1441} y={367.5} end={1520} a1={1427} a2={1537} ticks={[1456, 1477, 1499, 1520]} labels={num("40,60,80,100", [1456, 1477, 1499, 1520])} />
    <SliderBar x={1320} y={480} end={1536} a1={1305} a2={1553} ticks={[1324, 1430, 1537]} labels={num("100,150,200", [1324, 1430, 1537])} />
  </>
);

const frames: [number, number, number, number][] = [[1146, 137, 426, 450], [1152, 166, 414, 137], [1151, 308, 415, 113], [1150, 426, 414, 113]];
const captions: Label[] = [
  ["Управление магазином", 1286, 1442, 153.8], ["Закупка товара", 1301, 1405, 177.8], ["Склады", 1330, 1381, 326], ["Торговля", 1323, 1385, 443.8],
];
const smallCaptions: Label[] = [
  ["Объем партии", 1184, 1243, 218], ["Цена партии", 1315, 1368, 217], ["Цена за единицу", 1437, 1508, 218],
  ["Расчетный счет", 1433, 1498, 259], ["Склад магазина", 1185, 1253, 353], ["Основной склад", 1315, 1383, 353],
  ["Объем перевозки", 1445, 1519, 353], ["Текущий спрос", 1213, 1276, 466], ["Розничная цена", 1395, 1462, 466],
  ["Модельное время", 1319, 1393, 548], ["Принять оптовое предложение и закупиться", 1179, 1367, 268],
  ["Перевезти на склад магазина", 1290, 1416, 406], ["Остановить торговлю", 1184, 1275, 516],
];

const Sheet = () => (
  <div className="relative h-[825px] w-[1645px] overflow-hidden bg-white">
    {frames.map(([x, y, w, h]) => (
      <div key={`${x}-${y}`} className="absolute border border-black" style={{ left: x, top: y - SHEET_TOP, width: w, height: h }} />
    ))}
    {[[1169, 264], [1279, 402], [1173, 512]].map(([x, y]) => (
      <div key={x} className="absolute h-2 w-2 border border-b-[#e3e3e3] border-l-[#696969] border-r-[#e3e3e3] border-t-[#696969]" style={{ left: x, top: y - SHEET_TOP }} />
    ))}
    <div className="absolute left-[1347px] top-[461px] h-[3px] overflow-hidden font-['DejaVu_Sans',sans-serif] text-[6.500px] leading-[7px] text-[#555]">
      <span className="-mt-px block">year</span>
    </div>
    <svg className="absolute left-0 top-0" width="1645" height="825" viewBox={`0 ${SHEET_TOP} 1645 825`} fontFamily={TEXT}>
      <g shapeRendering="crispEdges">
        <Links />
        <Shapes />
      </g>
      <g fill="#333">
        {nodeLabels.map(([t, x1, x2, y], i) => (
          <text key={i} x={x1} y={y + 2.2} fontSize="6.800" textLength={x2 - x1}>{t}</text>
        ))}
        {values.map(([x, y, , h, t, tx]) => <Num key={`${x}-${y}`} x={tx} y={y + h / 2 + 0.8} t={t} />)}
      </g>
      {captions.map(([t, x1, x2, y]) => (
        <text key={t} x={x1} y={y + 4} fontSize="11" fontWeight="700" textLength={x2 - x1}>{t}</text>
      ))}
      <text x="1160" y="202" fontSize="8" fontWeight="700" textLength="107">Оптовое предложение:</text>
      {smallCaptions.map(([t, x1, x2, y]) => (
        <text key={t} x={x1} y={y + 3} fontSize="8" fill="#222" textLength={x2 - x1}>{t}</text>
      ))}
      <Gauges />
      <Charts />
    </svg>
  </div>
);

/* ---------- task assistant ---------- */

const red = "#a51212";
const panelIcons: Record<string, React.ReactNode> = {
  page: icons.page,
  open: icons.open,
  book: icons.book,
  film: (
    <>
      <rect x="1" y="2" width="16" height="14" fill="#444" />
      <path d="M1 4h16" stroke="#eee" strokeWidth="2" strokeDasharray="2 2" />
      <path d="M7 6v10M1 8.500h16" stroke="#888" />
    </>
  ),
  ask: (
    <>
      <circle cx="5.500" cy="6" r="4" fill="#fff" stroke="#222" strokeWidth="1.500" />
      <path d="M4 11h3v4H4z" fill="#222" />
      <text x="8.500" y="14" fontSize="16" fontWeight="700" fill="#e01010" fontFamily="Liberation Sans">?</text>
    </>
  ),
  tutor: (
    <>
      <circle cx="4" cy="4" r="2" fill="#e02020" />
      <path d="M4 6v6l-3 4M4 11l3 5M1 8h7" stroke="#e02020" strokeWidth="2.200" />
      <path d="M9 2.500h8v7H9zM13 10v3l-3 3.500M13 13l3 3.500" stroke="#e02020" strokeWidth="1.400" />
    </>
  ),
  gear: (
    <>
      <path d="M9 1.500v15M1.500 9h15M3.700 3.700l10.600 10.600M14.300 3.700L3.700 14.300" stroke={red} strokeWidth="1.800" />
      <circle cx="9" cy="9" r="4.800" fill="#fff" stroke={red} strokeWidth="1.500" />
      <circle cx="9" cy="9" r="1.600" stroke={red} strokeWidth="1.200" />
    </>
  ),
  steps: (
    <>
      <path d="M2 5h2M10 11h-3" stroke="#111" strokeWidth="2" />
      <rect x="5" y="3.500" width="7" height="3.500" rx="1.700" fill="#111" />
      <rect x="10.500" y="9.500" width="7" height="3.500" rx="1.700" fill="#111" />
    </>
  ),
  puzzle: <path d="M1 9h4V7h3V3h3v4h3v2h4v3h-4v3h-3v-3h-2v3H6v-3H1z" fill="#7c1111" />,
  globe: (
    <>
      <circle cx="9" cy="9" r="7.700" fill="#4a87cf" stroke="#2c5fa8" />
      <path d="M3 7q3-4 6-4l-1 4 4 1 3-3M4 12l4-2 3 2-1 4M12 10l4 1" stroke="#cfe3f8" strokeWidth="1.400" />
    </>
  ),
  workspace: (
    <>
      <rect x="1.500" y="2.500" width="14.500" height="13.500" fill="#fff" stroke="#111" strokeWidth="1.400" />
      <rect x="2" y="3" width="13.500" height="3.500" fill="#3c7cc8" />
      <rect x="2" y="6.500" width="4" height="9" fill="#f7dc27" />
    </>
  ),
};

const Item = ({ icon, children }: { icon?: string; children: React.ReactNode }) => (
  <div className="flex h-[22px] items-center">
    <div className="flex w-[20px] shrink-0 justify-start">{icon && <Svg size={17}>{panelIcons[icon]}</Svg>}</div>
    <span className="whitespace-nowrap text-[12.750px] text-[#333]">{children}</span>
  </div>
);

const Card = ({ title, children, className }: { title: string; children: React.ReactNode; className: string }) => (
  <section className={`shrink-0 border border-[#d9d9d9] bg-white bg-[linear-gradient(#e2e2e2,#ffffff_50px)] ${className}`}>
    <div className="flex h-[5px] gap-px border-b border-white bg-white px-px pt-px">
      <div className="flex-1 bg-[#a6a6a6]" />
      <div className="w-[24px] bg-[#c1001f]" />
    </div>
    <div className="flex h-[28px] items-center pl-[4px]">
      <svg width="13" height="13" viewBox="0 0 13 13">
        <rect x=".5" y=".5" width="12" height="12" rx="2" fill="#d2001f" stroke="#e9c6cb" />
        <path d="M5 3.500l4 3-4 3z" fill="#fff" />
      </svg>
      <h2 className="ml-[6px] text-[17px] font-bold tracking-[-0.2px] text-[#333]">{title}</h2>
    </div>
    <div className="px-[4px] pt-[2px]">{children}</div>
  </section>
);

const Rule = () => <div className="my-[3px] h-px bg-[#a0a0a0]" />;

const TaskAssistant = () => (
  <aside className="flex w-[250px] shrink-0 flex-col border-b border-l border-[#909090] bg-white">
    <div className="flex h-[34px] items-center pl-[3px] pr-[8px]">
      <span className="text-[14px] tracking-[-0.150px]">Task Assistant</span>
      <svg className="ml-auto" width="14" height="14" viewBox="0 0 14 14">
        <path d="M1 1l12 12M13 1L1 13" stroke="#000" strokeWidth="1.800" />
      </svg>
    </div>
    <div className="flex h-[27px] items-center pl-[6px] pb-px">
      <Svg>{icons.back}</Svg>
      <div className="ml-[8px]"><Svg>{icons.fwd}</Svg></div>
      <div className="ml-[8px]">
        <Svg>
          <path d="M3 9v7h12V9L9 4z" fill="#f2f2f2" stroke="#888" />
          <path d="M1 9.500L9 2l8 7.500" stroke="#5fa23a" strokeWidth="2.600" />
          <rect x="7" y="9.500" width="4" height="5.500" fill="#7aa9e8" stroke="#4c76b0" />
        </Svg>
      </div>
      <div className="ml-[6px] h-[21px] w-px bg-[#909090]" />
      <span className="ml-[8px] text-[14.500px] tracking-[-0.150px]">Getting Started</span>
      <div className="ml-[8px] h-0 w-0 border-x-[3px] border-t-[3px] border-x-transparent border-t-black" />
    </div>
    <div className="mb-[2px] ml-[3px] mr-[2px] flex flex-1 flex-col gap-[7px] border border-[#828790] bg-[repeating-linear-gradient(135deg,#f7f7f7_0_2px,#f0f0f0_2px_3px)] px-[5px] pt-[6px] font-['DejaVu_Sans_Condensed','DejaVu_Sans',sans-serif]">
      <Card title="Open..." className="h-[230px]">
        <Item icon="page">New default project</Item>
        <Item icon="page">New project wizard...</Item>
        <Rule />
        {["done.sip", "ShopGame.sip", "ShopGame (1).sip", "ShopGame (2).sip", "ShopGame done.sip"].map((f) => (
          <div key={f} className="flex h-[22px] items-center pl-[19px] text-[12.750px] text-[#333]">
            <svg width="8" height="7" viewBox="0 0 8 7" fill="none">
              <path d="M1 .5l2.500 3L1 6.500M4.500.5L7 3.500l-2.500 3" stroke="#a22" strokeWidth="1.200" />
            </svg>
            <span className="ml-[7px] whitespace-nowrap">{f}</span>
          </div>
        ))}
        <Rule />
        <Item icon="open">More...</Item>
      </Card>
      <Card title="Learn..." className="h-[171px]">
        <Item icon="film">Instructional Videos...</Item>
        <Item icon="ask">Project Assistant...</Item>
        <Item icon="tutor">Tutorials...</Item>
        <Item icon="gear">Samples...</Item>
        <Item icon="steps">How do I...</Item>
        <Item icon="puzzle">Bits &amp; Pieces...</Item>
      </Card>
      <Card title="Help..." className="h-[156px]">
        <Item icon="book">Help</Item>
        <Item>View the Welcome Dialog Box</Item>
        <Item>View Tip of the Day</Item>
        <Item icon="globe">Visit Studio Online</Item>
        <Rule />
        <Item icon="workspace">Change workspace...</Item>
      </Card>
    </div>
  </aside>
);

/* ---------- bottom bars ---------- */

const TabGlyph = () => (
  <svg width="14" height="14" viewBox="0 0 14 14" className="shrink-0">
    <rect x="1" y="1" width="8" height="5" fill="#f8e08a" stroke="#8c8c6a" />
    <path d="M8 2l5 4.500L8 11z" fill="#ccc" stroke="#888" />
    <circle cx="5.500" cy="8.500" r="4" fill="#8fb4f4" stroke="#4e6fa8" />
  </svg>
);

const Tabs = () => (
  <div className="flex h-[21px] w-[1669px] shrink-0 bg-[#f0f0f0]">
    <div className="flex w-[816px] border-t border-[#696969]">
      {["M7 4v10M14 4L9 9l5 5z", "M13 4L8 9l5 5z", "M8 4l5 5-5 5z", "M14 4v10M7 4l5 5-5 5z"].map((d, i) => (
        <div key={i} className="w-[21px] border-b border-r border-[#808080] bg-[#f3f3f3]">
          <svg width="20" height="19" viewBox="0 0 20 18"><path d={d} fill="#999" stroke="#888" /></svg>
        </div>
      ))}
      <div className="relative -mt-px h-[21px] w-[312px]">
        <svg className="absolute left-0 top-0" width="312" height="21" viewBox="0 0 312 21" fill="none" stroke="#666">
          <path d="M1 0l7 20H103L110 0z" fill="#fff" stroke="none" />
          <path d="M1 0l7 20H103L111 0M107 8l5 12h88L211 0M203 0l8 20h92L311 0" strokeWidth="1.200" />
        </svg>
        <div className="relative flex h-[21px] items-center text-[14.500px] tracking-[-0.3px] text-[#666]">
          <span className="flex w-[101px] items-center gap-1 pl-[9px] text-[14px] font-bold tracking-[-0.2px] text-[#555]"><TabGlyph />Diagram 1</span>
          <span className="flex w-[101px] items-center gap-[3px] pl-[12px]"><TabGlyph />Diagram 2</span>
          <span className="flex items-center gap-[3px] pl-[11px]"><TabGlyph />Diagram 3</span>
        </div>
      </div>
    </div>
    <div className="w-[6px] border-b border-r-2 border-[#808080] border-r-[#696969] bg-[#f0f0f0]" />
    <div className="flex flex-1 items-center bg-[#f0f0f0] pl-[21px]">
      <div className="mb-px h-[3px] w-[768px] rounded bg-[#858585]" />
      <svg className="ml-[39px] mt-[6px]" width="13" height="13" viewBox="0 0 13 13" fill="#bbb">
        {[[9, 1], [5, 5], [9, 5], [1, 9], [5, 9], [9, 9]].map(([x, y]) => <rect key={`${x}${y}`} x={x} y={y} width="3" height="3" />)}
      </svg>
    </div>
  </div>
);

const FormatBar = () => (
  <div className="flex h-[30px] w-[1080px] shrink-0 items-center border-b border-[#a0a0a0] bg-white">
    <div className="flex w-[12px] self-stretch"><Grip /></div>
    <Combo className="h-[26px] w-[170px] border-[#b0b0b0]" />
    <Combo className="ml-px h-[26px] w-[52px] border-[#b0b0b0]" />
    <Sep />
    {["font-bold", "italic", "underline"].map((c, i) => (
      <span key={c} className={`w-[26px] text-center font-['Liberation_Serif',serif] text-[17px] text-[#777] ${c}`}>{"BIU"[i]}</span>
    ))}
    <Strip items="| alignL alignC alignR alignJ | top mid low alignJ | fontColor v fill v pen v weight V dashes V | shapes V ] : alignObj v groupObj v | centerH centerV | front back2 forward backward | *grid" />
    <div className="w-[2px]" />
    <Edge />
  </div>
);

const StatusBar = () => (
  <div className="flex h-[26px] shrink-0 items-stretch border-t border-[#d0d0d0] bg-[#f0f0f0] py-px text-[14px]">
    <div className="w-[1594px] border-r border-[#d5d5d5]" />
    <div className="w-[23px] border-r border-[#d5d5d5]" />
    <div className="flex w-[251px] items-center justify-center border-r border-[#d5d5d5] pl-[2px]">0</div>
  </div>
);

/* ---------- taskbar ---------- */

const apps: React.ReactNode[] = [
  <svg width="30" height="30" viewBox="0 0 30 30"><path d="M0 0h14.300v14.300H0zM15.700 0H30v14.300H15.700zM0 15.700h14.300V30H0zM15.700 15.700H30V30H15.700z" fill="url(#win)" /><defs><linearGradient id="win" x1="0" y1="0" x2="1" y2="1"><stop stopColor="#7ddcff" /><stop offset="1" stopColor="#0c93f0" /></linearGradient></defs></svg>,
  <svg width="34" height="30" viewBox="0 0 34 30"><path d="M3 16l6-6 9 8-6 8z" fill="#1857b8" /><path d="M12 26L26 9l5 5-13 15-4-1z" fill="#3f9cf0" /></svg>,
  <svg width="26" height="32" viewBox="0 0 26 32"><path d="M13 1l6 7 1 8 3 6-6 9-8-2-5-7 3-7 1-9z" fill="#7c4be0" /><path d="M13 1l-1 10 3 8-6 10M12 11l8 5" stroke="#b79cf5" strokeWidth="1.500" fill="none" /></svg>,
  <svg width="32" height="30" viewBox="0 0 32 30"><path d="M1 4q0-3 3-3h8l4 4h12q3 0 3 3v18q0 2-2 2H3q-2 0-2-2z" fill="#e5a615" /><path d="M1 9h30v17q0 2-2 2H3q-2 0-2-2z" fill="#ffd34d" /><path d="M6 28v-5q0-3 3-3h14q3 0 3 3v5z" fill="#1377cf" /><path d="M11 24h10" stroke="#0b4f93" strokeWidth="2" /></svg>,
  <svg width="30" height="30" viewBox="0 0 30 30"><rect width="30" height="30" rx="4" fill="#08362b" /><path d="M14 6a9 9 0 0 0 0 18z" fill="#35b58c" /><path d="M16.500 6.500q5 3 5 8.500t-5 8.500" fill="none" stroke="#fff" strokeWidth="2.500" /></svg>,
  <svg width="32" height="32" viewBox="0 0 32 32"><path d="M23 1l8 3.500v23L23 31 2 12l3-3z" fill="#1e8ad6" /><path d="M23 1v30L2 21.500 5 24 23 9z" fill="#35a4f0" opacity="0" /><path d="M2 20.500L23 1l8 3.500v23L23 31V9.500L5 23.500z" fill="#35a4f0" /><path d="M23 9.500v13L14 16z" fill="#24282c" /></svg>,
  <svg width="32" height="32" viewBox="0 0 32 32"><circle cx="16" cy="16" r="15" fill="#fbc116" /><path d="M3 8.500a15 15 0 0 1 26.500 1H16a7 7 0 0 0-6 10z" fill="#e33b2e" /><path d="M3 8.500A15 15 0 0 0 15 31l6.500-11.500a7 7 0 0 1-11.500 0z" fill="#28a745" /><circle cx="16" cy="16" r="7" fill="#fff" /><circle cx="16" cy="16" r="5.500" fill="#3b7ded" /></svg>,
  <svg width="32" height="32" viewBox="0 0 32 32"><path d="M16 31A14 14 0 0 1 3 13q1-4 3-6l2 4q3-3 6-3 2-5 6-7 0 5 5 9 5 3 5 8a14 14 0 0 1-14 13z" fill="#ff7a1e" /><path d="M20 1q0 5 5 9 5 3 5 8l-3 7-6-9z" fill="#ffcf32" /><circle cx="16.500" cy="18" r="6.500" fill="#7a45dd" /><path d="M5 13q5-2 9 1l-3 4q3 5 9 3-4 7-11 3-4-4-4-11z" fill="#ff4558" /></svg>,
  <svg width="32" height="32" viewBox="0 0 32 32"><rect x="1" y="2" width="30" height="29" rx="4" fill="#6f7b87" /><circle cx="16" cy="16" r="12.500" fill="#f3f3f3" /><path d="M9 10l7 6 8-4M16 16v8" stroke="#222" strokeWidth="2.500" fill="none" /></svg>,
  <svg width="28" height="30" viewBox="0 0 28 30"><rect x="3" y="1" width="22" height="28" rx="2" fill="#777" /><path d="M3 15h22v12q0 2-2 2H5q-2 0-2-2z" fill="#444" /><path d="M13 12l2.500 5 5.500.7-4 4 1 5.500-5-2.700-5 2.700 1-5.500-4-4 5.500-.7z" fill="#4ab0f5" stroke="#e7f5ff" /><path d="M18.500 4l1 2.500 2.500.2-2 1.700.7 2.600-2.200-1.400L16.300 11l.7-2.600-2-1.700 2.500-.2z" fill="#bfe5ff" /></svg>,
  <LogoMark size={31} />,
  <svg width="32" height="32" viewBox="0 0 32 32"><circle cx="15" cy="15.500" r="14" fill="#229ed9" /><path d="M6 15.500l17-7-3 15-5-4-3 3-.5-5z" fill="#fff" /></svg>,
];

const Taskbar = () => (
  <footer className="flex h-[59px] shrink-0 items-stretch border-t border-[#3a3a3a] bg-[linear-gradient(90deg,#202020,#202020_33%,#241f1e_42%,#23282d_56%,#232a31_72%,#22272b_88%,#1f2123)] pl-[629.500px] text-white">
    {apps.map((a, i) => (
      <div key={i} className={`relative flex w-[55.200px] shrink-0 items-center justify-center pb-px ${i === 10 ? "my-[4px] rounded bg-[#34383c] bg-clip-content px-[4px]" : ""}`}>
        {a}
        {i === 1 && <span className="absolute left-[22px] top-[7px] rounded-full bg-[#dfa0e8] px-[5px] text-[14px] leading-[20px] tracking-[-0.5px] text-black">99+</span>}
        {i === 11 && <span className="absolute left-[30px] top-[13px] rounded-[6px] bg-[#8a8a8a] px-[2px] text-[11px] leading-[14px]">..46</span>}
        {(i === 2 || i === 3 || i === 11) && <span className="absolute bottom-[5px] h-[3px] w-[8px] rounded-full bg-[#9a9a9a]" />}
        {i === 10 && <span className="absolute bottom-[1px] h-[3px] w-[20px] rounded-full bg-[#dfa0e8]" />}
      </div>
    ))}
    <div className="ml-auto flex items-center pb-[3px] pr-[23px]">
      <svg width="16" height="10" viewBox="0 0 16 10" fill="none"><path d="M2 8l6-6 6 6" stroke="#fff" strokeWidth="1.800" /></svg>
      <span className="ml-[26px] w-[28px] text-[14px] tracking-[-0.3px]">РУС</span>
      <svg className="ml-[23px]" width="22" height="18" viewBox="0 0 22 18" fill="none" stroke="#fff" strokeWidth="1.600">
        <path d="M1.500 7q9.500-8 19 0M4.500 10q6.500-6 13 0M7.500 13q3.500-3.500 7 0" />
        <circle cx="11" cy="15.500" r="1" fill="#fff" />
      </svg>
      <svg className="ml-[8px]" width="20" height="18" viewBox="0 0 20 18" fill="none" stroke="#fff" strokeWidth="1.500">
        <path d="M1.500 6.500h3.500l4-4v13l-4-4H1.500zM12 6q2 3 0 6M14.500 4q3.500 5 0 10" />
        <path d="M17 2q4.500 7 0 14" stroke="#777" />
      </svg>
      <svg className="ml-[9px]" width="22" height="18" viewBox="0 0 22 18" fill="none" stroke="#fff" strokeWidth="1.600">
        <path d="M7 4h10q2 0 2 2v8q0 2-2 2H5q-2 0-2-2v-2M20.500 8v4" />
        <path d="M8 9h9v5H7z" fill="#fff" />
        <path d="M5 1L2 8h4l-1 5 4-7H6z" fill="#fff" stroke="#222" strokeWidth=".6" />
      </svg>
      <div className="ml-[18px] w-[72px] whitespace-nowrap text-right text-[14.500px] leading-[20px] tracking-[-0.1px]">
        12:58 AM
        <br />
        2/19/2025
      </div>
    </div>
  </footer>
);

export default function App() {
  return (
    <div className={`flex h-[1079px] w-[1919px] flex-col overflow-hidden bg-white text-black ${SANS}`}>
      <Header />
      <div className="-mt-[2px] flex h-[848px] shrink-0">
        <div className="mt-[2px] flex w-[1669px] flex-col">
          <div className="flex">
            <Sheet />
            <div className="w-[20px] bg-[#f0f0f0] pt-[21px]">
              <div className="ml-[8px] h-[54px] w-[3px] rounded bg-[#858585]" />
            </div>
          </div>
          <Tabs />
        </div>
        <TaskAssistant />
      </div>
      <FormatBar />
      <StatusBar />
      <Taskbar />
    </div>
  );
}
